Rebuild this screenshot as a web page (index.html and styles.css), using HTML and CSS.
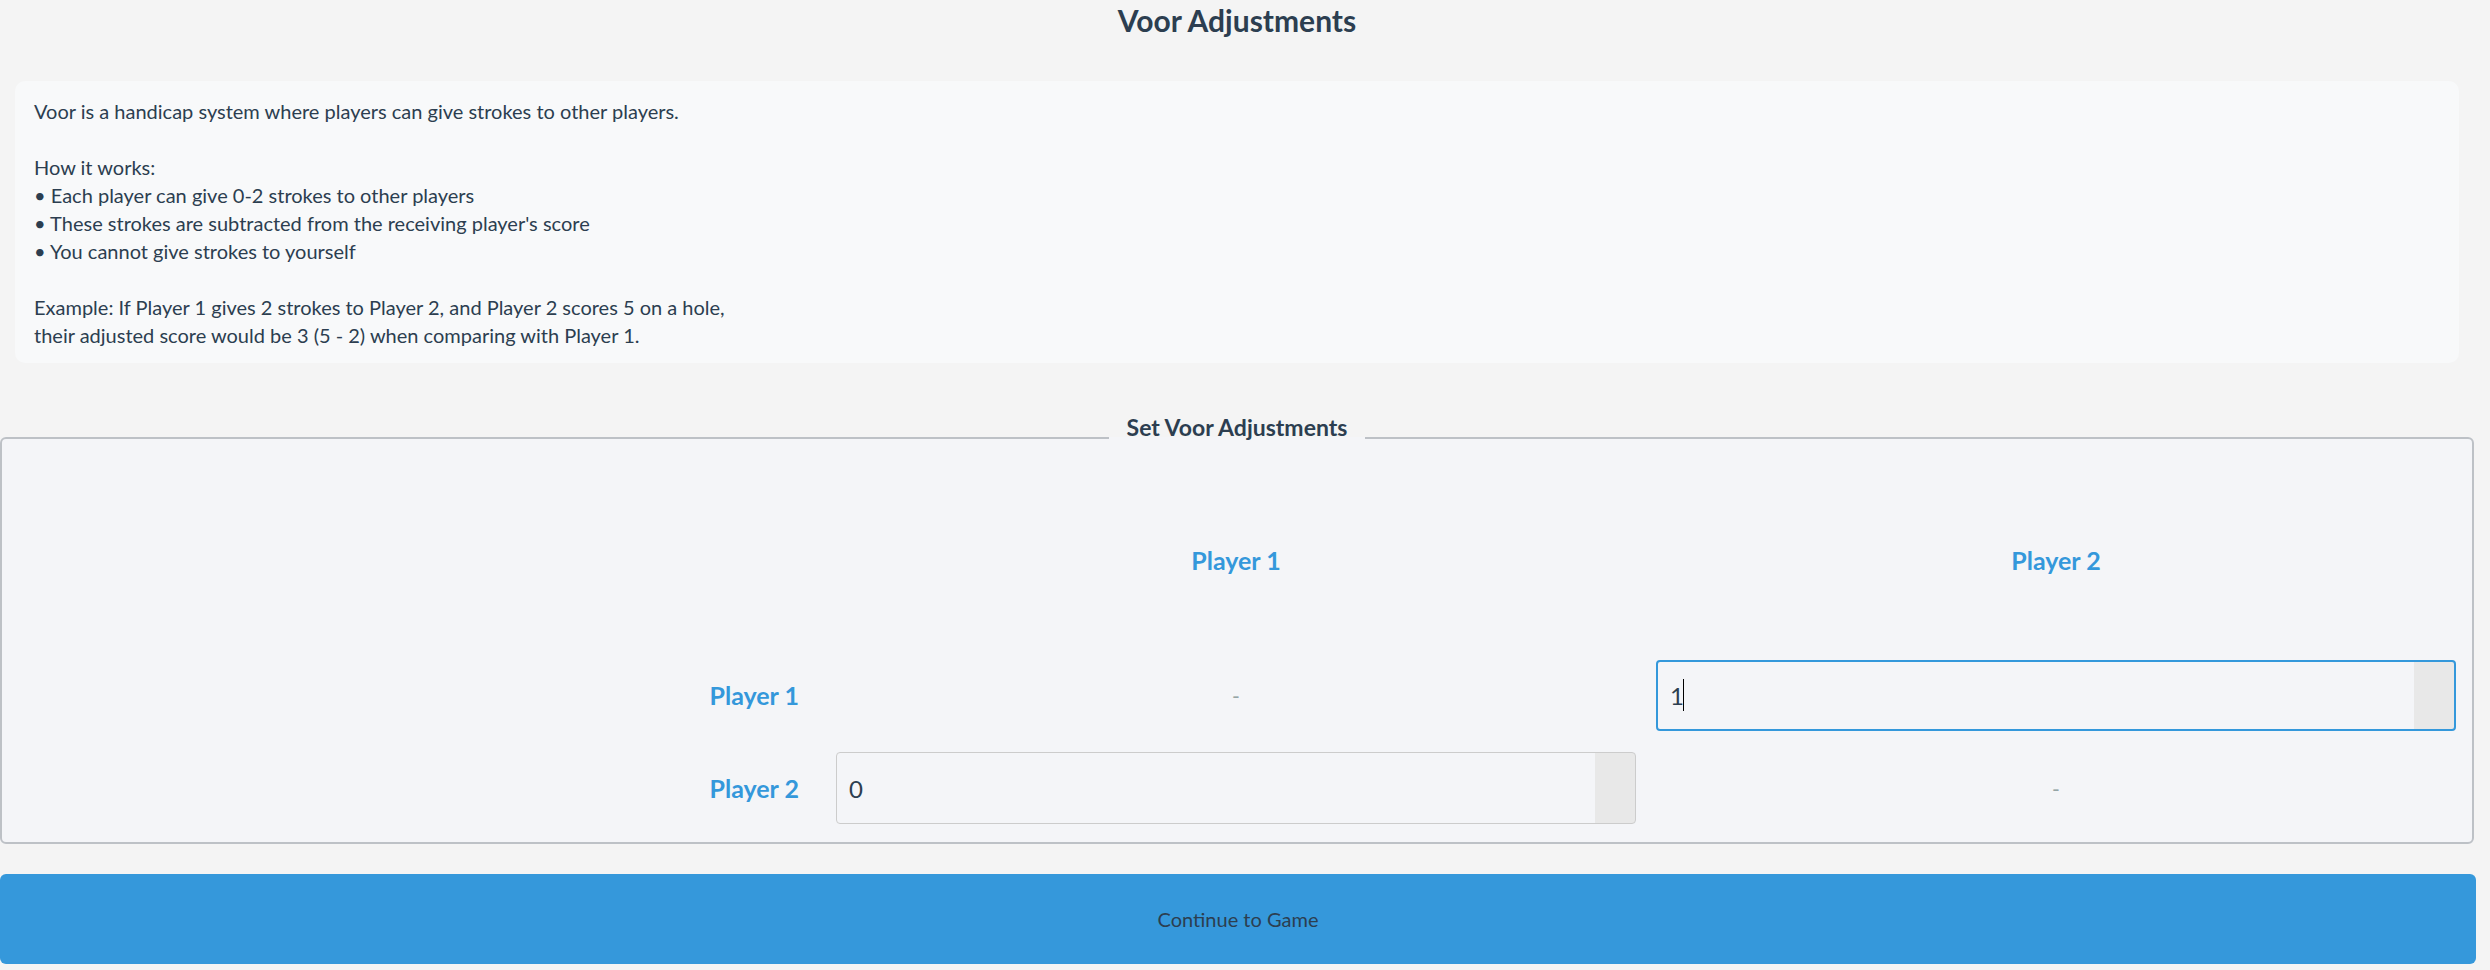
FILE: index.html
```html
<!DOCTYPE html>
<html lang="en">
<head>
<meta charset="utf-8">
<title>Voor Adjustments</title>
<link rel="stylesheet" href="styles.css">
</head>
<body>
<div class="page">
  <h1 class="title">Voor Adjustments</h1>
  <div class="info">Voor is a handicap system where players can give strokes to other players.

How it works:
• Each player can give 0-2 strokes to other players
• These strokes are subtracted from the receiving player's score
• You cannot give strokes to yourself

Example: If Player 1 gives 2 strokes to Player 2, and Player 2 scores 5 on a hole,
their adjusted score would be 3 (5 - 2) when comparing with Player 1.</div>

  <fieldset class="voor">
    <legend class="voor-legend">Set Voor Adjustments</legend>
    <div class="matrix">
      <div class="corner"></div>
      <div class="head">Player 1</div>
      <div class="head">Player 2</div>

      <div class="rowlabel">Player 1</div>
      <div class="cell dash">-</div>
      <div class="cell">
        <div class="field">
          <input class="num focused" type="text" value="1">
          <span class="caret"></span>
        </div>
      </div>

      <div class="rowlabel">Player 2</div>
      <div class="cell">
        <div class="field">
          <input class="num" type="text" value="0">
        </div>
      </div>
      <div class="cell dash">-</div>
    </div>
  </fieldset>

  <button class="continue" type="button">Continue to Game</button>
</div>
</body>
</html>
```

FILE: styles.css
```css
html, body {
  margin: 0;
  padding: 0;
  background: #f4f4f4;
}

body {
  font-family: "Lato", "Noto Sans", "Liberation Sans", sans-serif;
  color: #2c3e50;
}

.page {
  width: 2474px;
}

.title {
  margin: 0 0 41px 0;
  height: 40px;
  font-size: 30px;
  line-height: 40px;
  font-weight: 700;
  text-align: center;
  color: #2c3e50;
}

.info {
  margin: 0 15px;
  padding: 16px 18px 14px 19px;
  background: #f8f9fa;
  border-radius: 10px;
  font-size: 20px;
  line-height: 28px;
  white-space: pre-line;
}

.voor {
  margin: 51px 0 0 0;
  padding: 0 16px 18px 16px;
  border: 2px solid #bdc1c6;
  border-radius: 6px;
  background: #f4f5f8;
  min-width: 0;
}

.voor-legend {
  margin: 0 auto;
  padding: 0 18px 22px 18px;
  font-size: 23px;
  line-height: 26px;
  font-weight: 700;
  color: #2c3e50;
}

.matrix {
  display: grid;
  grid-template-columns: 1fr 800px 800px;
  grid-template-rows: 156px 72px 72px;
  column-gap: 20px;
  row-gap: 21px;
  padding-top: 20px;
}

.head {
  display: flex;
  align-items: center;
  justify-content: center;
  font-size: 25px;
  font-weight: 700;
  color: #3498db;
}

.rowlabel {
  display: flex;
  align-items: center;
  justify-content: flex-end;
  padding-right: 17px;
  font-size: 25px;
  font-weight: 700;
  color: #3498db;
}

.cell {
  display: flex;
  align-items: center;
  justify-content: center;
}

.dash {
  font-size: 21px;
  color: #95a5a6;
}

.field {
  position: relative;
  width: 100%;
}

.num {
  display: block;
  box-sizing: border-box;
  width: 100%;
  height: 72px;
  margin: 0;
  padding: 0 52px 0 12px;
  border: 1px solid #cccccc;
  border-radius: 4px;
  background: linear-gradient(to left, #e8e8e8 40px, transparent 40px);
  font-family: "Lato", "Noto Sans", sans-serif;
  font-size: 24px;
  color: #2c3e50;
  outline: none;
}

.num.focused {
  height: 71px;
  border: 2px solid #3498db;
  padding-left: 12px;
}

.caret {
  position: absolute;
  left: 27px;
  top: 19px;
  width: 1px;
  height: 32px;
  background: #000000;
}

.continue {
  display: block;
  box-sizing: border-box;
  width: 2476px;
  height: 90px;
  margin: 30px 0 0 0;
  padding: 0;
  border: none;
  border-radius: 6px;
  background: #3598db;
  font-family: "Lato", "Noto Sans", sans-serif;
  font-size: 20px;
  color: #2c3e50;
  text-align: center;
  cursor: pointer;
}
```
